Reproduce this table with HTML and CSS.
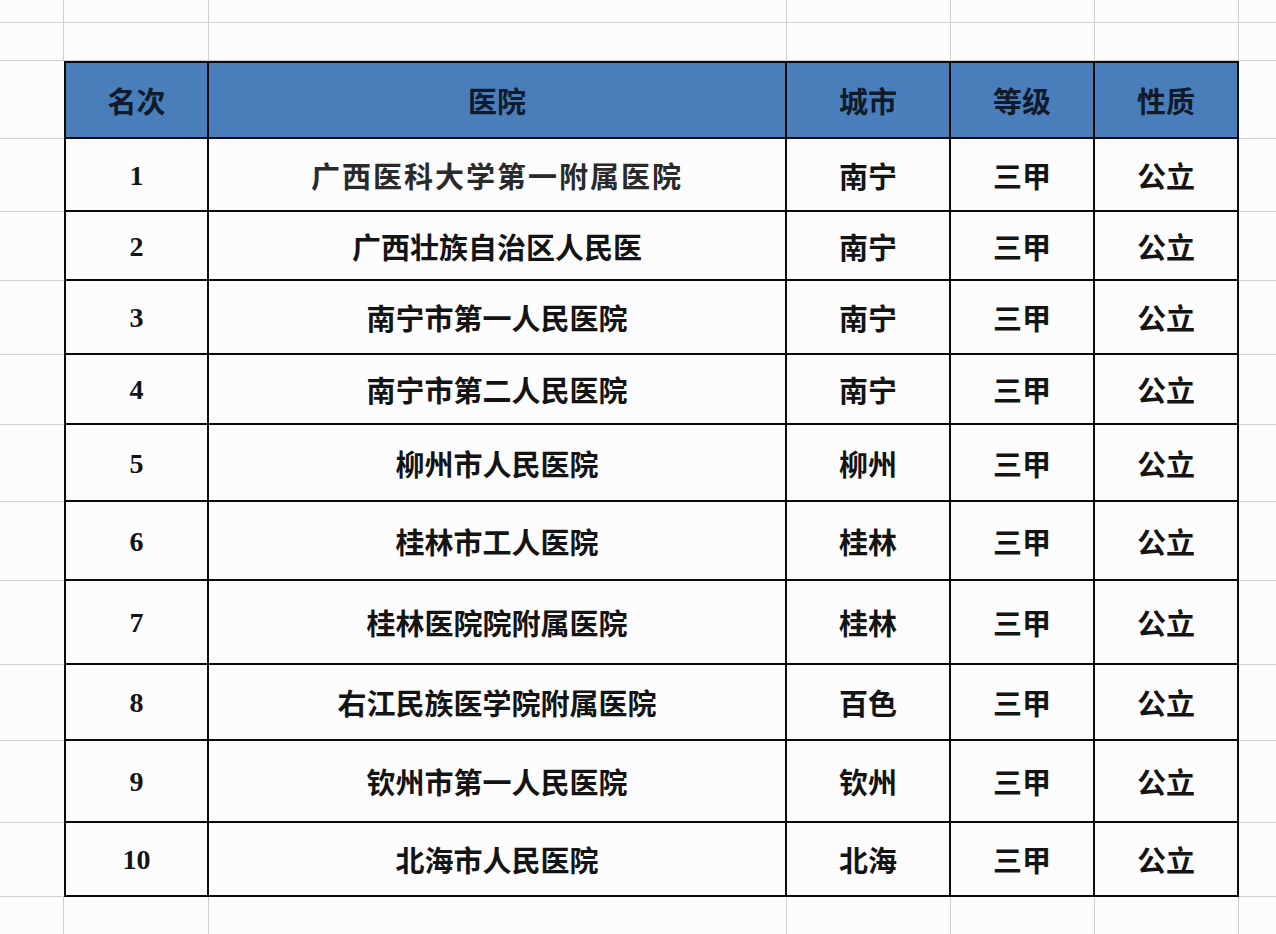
FILE: index.html
```html
<!DOCTYPE html>
<html lang="zh-CN">
<head>
<meta charset="utf-8">
<title>广西医院排名</title>
<link rel="stylesheet" href="styles.css">
</head>
<body>
<div class="sheet">
  <!-- row 0 -->
  <div class="g vr"></div><div class="g vr"></div><div class="g vr"></div><div class="g vr"></div><div class="g vr"></div><div class="g vr"></div><div class="g"></div>
  <!-- row 1 -->
  <div class="g vr"></div><div class="g vr"></div><div class="g vr"></div><div class="g vr"></div><div class="g vr"></div><div class="g vr"></div><div class="g"></div>
  <!-- header -->
  <div class="g"></div>
  <div class="t h first">名次</div><div class="t h">医院</div><div class="t h">城市</div><div class="t h">等级</div><div class="t h">性质</div>
  <div class="g"></div>
  <!-- 1 -->
  <div class="g"></div>
  <div class="t first num">1</div><div class="t wide">广西医科大学第一附属医院</div><div class="t">南宁</div><div class="t">三甲</div><div class="t">公立</div>
  <div class="g"></div>
  <!-- 2 -->
  <div class="g"></div>
  <div class="t first num">2</div><div class="t">广西壮族自治区人民医</div><div class="t">南宁</div><div class="t">三甲</div><div class="t">公立</div>
  <div class="g"></div>
  <!-- 3 -->
  <div class="g"></div>
  <div class="t first num">3</div><div class="t">南宁市第一人民医院</div><div class="t">南宁</div><div class="t">三甲</div><div class="t">公立</div>
  <div class="g"></div>
  <!-- 4 -->
  <div class="g"></div>
  <div class="t first num">4</div><div class="t">南宁市第二人民医院</div><div class="t">南宁</div><div class="t">三甲</div><div class="t">公立</div>
  <div class="g"></div>
  <!-- 5 -->
  <div class="g"></div>
  <div class="t first num">5</div><div class="t">柳州市人民医院</div><div class="t">柳州</div><div class="t">三甲</div><div class="t">公立</div>
  <div class="g"></div>
  <!-- 6 -->
  <div class="g"></div>
  <div class="t first num">6</div><div class="t">桂林市工人医院</div><div class="t">桂林</div><div class="t">三甲</div><div class="t">公立</div>
  <div class="g"></div>
  <!-- 7 -->
  <div class="g"></div>
  <div class="t first num">7</div><div class="t">桂林医院院附属医院</div><div class="t">桂林</div><div class="t">三甲</div><div class="t">公立</div>
  <div class="g"></div>
  <!-- 8 -->
  <div class="g"></div>
  <div class="t first num">8</div><div class="t">右江民族医学院附属医院</div><div class="t">百色</div><div class="t">三甲</div><div class="t">公立</div>
  <div class="g"></div>
  <!-- 9 -->
  <div class="g"></div>
  <div class="t first num">9</div><div class="t">钦州市第一人民医院</div><div class="t">钦州</div><div class="t">三甲</div><div class="t">公立</div>
  <div class="g"></div>
  <!-- 10 -->
  <div class="g"></div>
  <div class="t first num">10</div><div class="t">北海市人民医院</div><div class="t">北海</div><div class="t">三甲</div><div class="t">公立</div>
  <div class="g"></div>
  <!-- bottom row -->
  <div class="g vr nb"></div><div class="g vr nb"></div><div class="g vr nb"></div><div class="g vr nb"></div><div class="g vr nb"></div><div class="g vr nb"></div><div class="g nb"></div>
</div>
</body>
</html>
```

FILE: styles.css
```css
* { box-sizing: border-box; }

html, body {
  margin: 0;
  padding: 0;
  background: #fcfcfd;
}

body {
  width: 1276px;
  height: 934px;
  overflow: hidden;
  font-family: "Noto Sans CJK SC", "Noto Sans", sans-serif;
}

.sheet {
  display: grid;
  grid-template-columns: 64px 145px 578px 164px 144px 144px 37px;
  grid-template-rows: 23px 38px 78px 73px 69px 74px 70px 77px 79px 84px 76px 82px 74px 37px;
  height: 934px;
}

.g {
  border-bottom: 1px solid #cfcfd2;
}

.g.vr {
  border-right: 1px solid #cfcfd2;
}

.g.nb {
  border-bottom: none;
}

.t {
  display: flex;
  align-items: center;
  justify-content: center;
  border-right: 2px solid #0b0b0b;
  border-bottom: 2px solid #0b0b0b;
  font-size: 29px;
  font-weight: 700;
  color: #141414;
  white-space: nowrap;
}

.t.first {
  border-left: 2px solid #0b0b0b;
}

.t.h {
  background: #4a7ebb;
  color: #0f1a2b;
  border-top: 2px solid #0b0b0b;
}

.t.num {
  font-family: "Liberation Serif", "Times New Roman", serif;
  font-size: 28px;
  font-weight: 700;
  padding-top: 2px;
}

.t.wide {
  letter-spacing: 2px;
  color: #2a2a2a;
}
```
